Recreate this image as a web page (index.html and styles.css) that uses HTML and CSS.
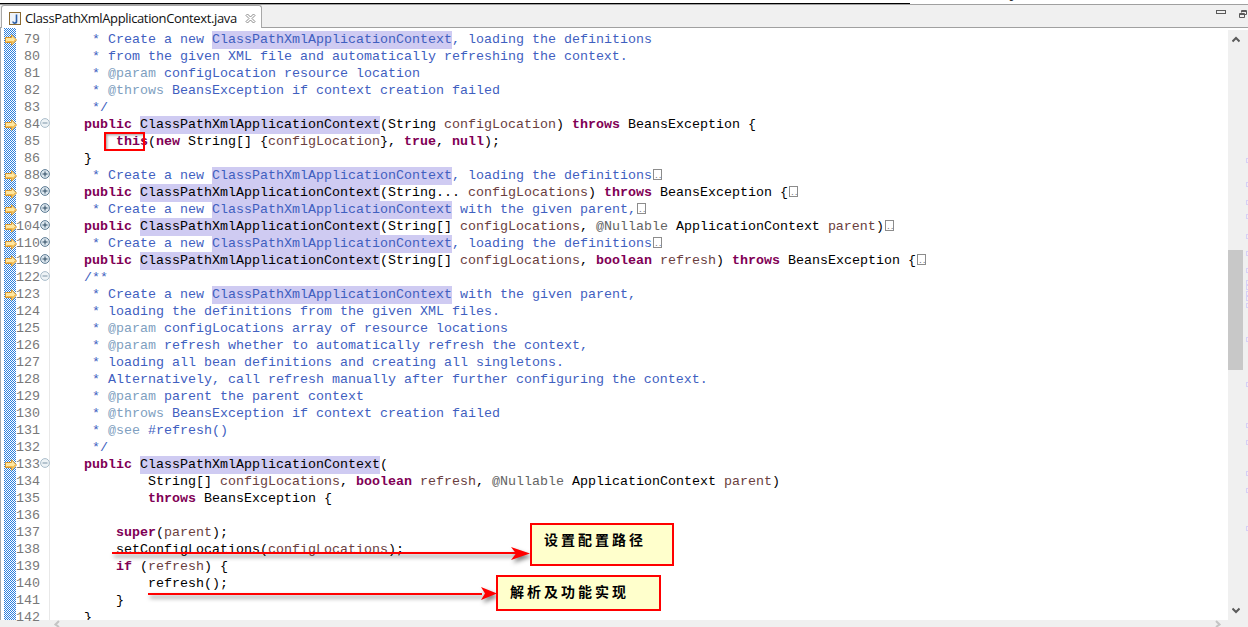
FILE: index.html
```html
<!DOCTYPE html>
<html lang="en">
<head>
<meta charset="utf-8">
<title>ClassPathXmlApplicationContext.java</title>
<link rel="stylesheet" href="styles.css">
</head>
<body>
<svg class="defs" width="0" height="0" aria-hidden="true">
  <symbol id="arrow" viewBox="0 0 12 12"><path d="M.5 3.500H6.500V.8L11.500 6 6.500 11.200V8.500H.5z" fill="#ffe7a0" stroke="#d8962a" stroke-width="1"/><path d="M1.500 7.500H7.500V9L10 6" fill="none" stroke="#f2b94a"/></symbol>
  <symbol id="plus" viewBox="0 0 10 10"><circle cx="5" cy="5" r="4.400" fill="#dbe6ee" stroke="#5f7d94"/><path d="M2.500 5h5M5 2.500v5" stroke="#2c4a62" stroke-width="1"/></symbol>
  <symbol id="minus" viewBox="0 0 10 10"><circle cx="5" cy="5" r="4.400" fill="#eef3f6" stroke="#a9bcc9"/><path d="M2.500 5h5" stroke="#7c95a7" stroke-width="1"/></symbol>
</svg>
<div class="window">
  <div class="topstrip"><span class="strip-black"></span><span class="strip-j">J</span></div>
  <div class="tabbar">
    <div class="tab">
      <svg class="file-icon" width="12" height="13" viewBox="0 0 12 13"><rect x=".5" y=".5" width="11" height="12" fill="#eef3fa" stroke="#8a6a32"/><path d="M7.500 2.500v6.500a1.800 1.800 0 0 1-3.600 .5" fill="none" stroke="#2a5ea8" stroke-width="1.600"/></svg>
      <span class="tab-title">ClassPathXmlApplicationContext.java</span>
      <svg class="close-icon" width="11" height="11" viewBox="0 0 11 11"><path d="M1 2.500 2.500 1 5.500 4 8.500 1 10 2.500 7 5.500 10 8.500 8.500 10 5.500 7 2.500 10 1 8.500 4 5.500z" fill="#fff" stroke="#8b8b8b"/></svg>
    </div>
    <div class="tab-tools">
      <span class="tool-min"></span>
      <svg class="tool-restore" width="8" height="8" viewBox="0 0 8 8"><path d="M2.500 2.500V.5h5v4H5.500M.5 3.500h5v4h-5zM.5 4.500h5M2.500 1.500h5" fill="#f0f0f0" stroke="#5a5a5a"/></svg>
    </div>
  </div>
  <div class="editor">
    <div class="annot">
      <i class="cell"><svg class="mk"><use href="#arrow"/></svg></i><i class="cell"></i><i class="cell"></i><i class="cell"></i><i class="cell"></i>
      <i class="cell"><svg class="mk"><use href="#arrow"/></svg></i><i class="cell"></i><i class="cell"></i>
      <i class="cell"><svg class="mk"><use href="#arrow"/></svg></i><i class="cell"><svg class="mk"><use href="#arrow"/></svg></i><i class="cell"><svg class="mk"><use href="#arrow"/></svg></i><i class="cell"><svg class="mk"><use href="#arrow"/></svg></i><i class="cell"><svg class="mk"><use href="#arrow"/></svg></i><i class="cell"><svg class="mk"><use href="#arrow"/></svg></i>
      <i class="cell"></i>
      <i class="cell"><svg class="mk"><use href="#arrow"/></svg></i>
      <i class="cell"></i><i class="cell"></i><i class="cell"></i><i class="cell"></i><i class="cell"></i><i class="cell"></i><i class="cell"></i><i class="cell"></i><i class="cell"></i>
      <i class="cell"><svg class="mk"><use href="#arrow"/></svg></i>
    </div>
    <div class="nums"><span>79</span><span>80</span><span>81</span><span>82</span><span>83</span><span>84</span><span>85</span><span>86</span><span>88</span><span>93</span><span>97</span><span>104</span><span>110</span><span>119</span><span>122</span><span>123</span><span>124</span><span>125</span><span>126</span><span>127</span><span>128</span><span>129</span><span>130</span><span>131</span><span>132</span><span>133</span><span>134</span><span>135</span><span>136</span><span>137</span><span>138</span><span>139</span><span>140</span><span>141</span><span>142</span></div>
    <div class="folds">
      <i class="cell"></i><i class="cell"></i><i class="cell"></i><i class="cell"></i><i class="cell"></i>
      <i class="cell"><svg class="fd"><use href="#minus"/></svg></i><i class="cell"></i><i class="cell"></i>
      <i class="cell"><svg class="fd"><use href="#plus"/></svg></i><i class="cell"><svg class="fd"><use href="#plus"/></svg></i><i class="cell"><svg class="fd"><use href="#plus"/></svg></i><i class="cell"><svg class="fd"><use href="#plus"/></svg></i><i class="cell"><svg class="fd"><use href="#plus"/></svg></i><i class="cell"><svg class="fd"><use href="#plus"/></svg></i>
      <i class="cell"><svg class="fd"><use href="#minus"/></svg></i>
      <i class="cell"></i><i class="cell"></i><i class="cell"></i><i class="cell"></i><i class="cell"></i><i class="cell"></i><i class="cell"></i><i class="cell"></i><i class="cell"></i><i class="cell"></i>
      <i class="cell"><svg class="fd"><use href="#minus"/></svg></i>
    </div>
<pre class="code"><span class="c">     * Create a new <mark>ClassPathXmlApplicationContext</mark>, loading the definitions</span>
<span class="c">     * from the given XML file and automatically refreshing the context.</span>
<span class="c">     * <span class="t">@param</span> configLocation resource location</span>
<span class="c">     * <span class="t">@throws</span> BeansException if context creation failed</span>
<span class="c">     */</span>
    <b>public</b> <mark>ClassPathXmlApplicationContext</mark>(String <span class="v">configLocation</span>) <b>throws</b> BeansException {
        <b>this</b>(<b>new</b> String[] {<span class="v">configLocation</span>}, <b>true</b>, <b>null</b>);
    }
<span class="c">     * Create a new <mark>ClassPathXmlApplicationContext</mark>, loading the definitions</span><span class="more">..</span>
    <b>public</b> <mark>ClassPathXmlApplicationContext</mark>(String... <span class="v">configLocations</span>) <b>throws</b> BeansException {<span class="more">..</span>
<span class="c">     * Create a new <mark>ClassPathXmlApplicationContext</mark> with the given parent,</span><span class="more">..</span>
    <b>public</b> <mark>ClassPathXmlApplicationContext</mark>(String[] <span class="v">configLocations</span>, <span class="a">@Nullable</span> ApplicationContext <span class="v">parent</span>)<span class="more">..</span>
<span class="c">     * Create a new <mark>ClassPathXmlApplicationContext</mark>, loading the definitions</span><span class="more">..</span>
    <b>public</b> <mark>ClassPathXmlApplicationContext</mark>(String[] <span class="v">configLocations</span>, <b>boolean</b> <span class="v">refresh</span>) <b>throws</b> BeansException {<span class="more">..</span>
<span class="c">    /**</span>
<span class="c">     * Create a new <mark>ClassPathXmlApplicationContext</mark> with the given parent,</span>
<span class="c">     * loading the definitions from the given XML files.</span>
<span class="c">     * <span class="t">@param</span> configLocations array of resource locations</span>
<span class="c">     * <span class="t">@param</span> refresh whether to automatically refresh the context,</span>
<span class="c">     * loading all bean definitions and creating all singletons.</span>
<span class="c">     * Alternatively, call refresh manually after further configuring the context.</span>
<span class="c">     * <span class="t">@param</span> parent the parent context</span>
<span class="c">     * <span class="t">@throws</span> BeansException if context creation failed</span>
<span class="c">     * <span class="t">@see</span> #refresh()</span>
<span class="c">     */</span>
    <b>public</b> <mark>ClassPathXmlApplicationContext</mark>(
            String[] <span class="v">configLocations</span>, <b>boolean</b> <span class="v">refresh</span>, <span class="a">@Nullable</span> ApplicationContext <span class="v">parent</span>)
            <b>throws</b> BeansException {

        <b>super</b>(<span class="v">parent</span>);
        setConfigLocations(<span class="v">configLocations</span>);
        <b>if</b> (<span class="v">refresh</span>) {
            refresh();
        }
    }</pre>
    <div class="vscroll">
      <svg class="chev" width="8" height="7" viewBox="0 0 8 7"><path d="M.5 5.500 4 2 7.500 5.500" fill="none" stroke="#5a5a5a" stroke-width="2"/></svg>
      <div class="thumb"></div>
      <svg class="chev" width="8" height="7" viewBox="0 0 8 7"><path d="M.5 1.500 4 5 7.500 1.500" fill="none" stroke="#5a5a5a" stroke-width="2"/></svg>
      <i class="ov ov1"></i><i class="ov ov2"></i><i class="ov ov3"></i><i class="ov ov4"></i><i class="ov ov5"></i><i class="ov ov6"></i><i class="ov ov7"></i><i class="ov ov8"></i><i class="ov ov9"></i><i class="ov ov10"></i><i class="ov ov11"></i><i class="ov ov12"></i><i class="ov ov13"></i><i class="ov ov14"></i><i class="ov ov15"></i><i class="ov ov16"></i><i class="ov ov17"></i><i class="ov ov18"></i><i class="ov ov19"></i>
    </div>
  </div>
  <div class="hscroll">
    <svg width="6" height="7" viewBox="0 0 6 7"><path d="M5 1 1.500 4.500 5 7" fill="none" stroke="#c4c4c4" stroke-width="2"/></svg>
    <svg width="6" height="7" viewBox="0 0 6 7"><path d="M1 1 4.500 4.500 1 7" fill="none" stroke="#c4c4c4" stroke-width="2"/></svg>
  </div>

  <div class="redbox"></div>
  <svg class="pointers" width="1248" height="627" viewBox="0 0 1248 627" aria-hidden="true">
    <path d="M112 553H516" stroke="#f00" stroke-width="2" fill="none"/>
    <path d="M511 547 530 553.500 511 560 516 553.500z" fill="#f00"/>
    <path d="M148 594H482" stroke="#f00" stroke-width="2" fill="none"/>
    <path d="M481 587 497 593.500 481 600 485 593.500z" fill="#f00"/>
  </svg>
  <div class="note note-one">设置配置路径</div>
  <div class="note note-two">解析及功能实现</div>
</div>
</body>
</html>
```

FILE: styles.css
```css
* { box-sizing: border-box; }
html, body { margin: 0; padding: 0; background: #fff; }
.defs { position: absolute; }
.window { position: relative; width: 1248px; height: 627px; overflow: hidden; background: #fff; display: flex; flex-direction: column; }

.topstrip { height: 5px; flex: none; border-bottom: 1px solid #a0a0a0; display: flex; align-items: flex-start; position: relative; background: #fff; }
.strip-black { display: block; width: 910px; height: 4px; border-bottom: 1px solid #000; }
.strip-j { position: absolute; left: 1009px; top: -9px; font: 11px "Liberation Sans", sans-serif; color: #222; }

.tabbar { height: 23px; flex: none; display: flex; justify-content: space-between; background: #f0f0f0; border-bottom: 1px solid #a0a0a0; }
.tab { width: 261px; height: 23px; margin-left: 1px; background: #fff; border: 1px solid #a8a8a8; border-bottom: 0; border-radius: 3px 3px 0 0; display: flex; align-items: center; padding: 2px 0 0 7px; }
.file-icon { flex: none; margin-right: 4px; }
.tab-title { font: 13px "Open Sans", sans-serif; color: #111; white-space: nowrap; width: 220px; letter-spacing: -.36px; }
.close-icon { flex: none; }
.tab-tools { display: flex; align-items: flex-start; padding: 5px 1px 0 0; }
.tool-min { display: block; width: 10px; height: 4px; border: 1px solid #5a5a5a; background: #f0f0f0; margin-right: 13px; }

.editor { flex: 1; min-height: 0; display: flex; align-items: stretch; background: #fff; position: relative; border-left: 1px solid #a8a8a8; }
.annot { flex: none; width: 12px; margin-left: 3px; padding-top: 3px; display: flex; flex-direction: column; background: url("data:image/svg+xml,%3Csvg xmlns='http://www.w3.org/2000/svg' width='2' height='2' shape-rendering='crispEdges'%3E%3Crect width='2' height='2' fill='%23fff'/%3E%3Crect width='1' height='1' fill='%232b7fde'/%3E%3Crect x='1' y='1' width='1' height='1' fill='%232b7fde'/%3E%3C/svg%3E") 0 0 / 2px 2px; }
.cell { display: block; height: 17px; flex: none; position: relative; }
.mk { display: block; width: 12px; height: 12px; margin: 3px 0 0 1px; overflow: visible; }
.nums { flex: none; width: 24px; padding-top: 3px; display: flex; flex-direction: column; font: 13.333px/17px "Liberation Mono", monospace; color: #787878; text-align: right; }
.nums span { display: block; height: 17px; }
.folds { flex: none; width: 10px; padding-top: 3px; display: flex; flex-direction: column; border-right: 1px solid #e8e8e8; }
.fd { display: block; width: 10px; height: 10px; margin-top: 2px; }

.code { flex: 1; min-width: 0; margin: 0; padding: 3px 0 0 2px; overflow: hidden; font: 13.333px/17px "Liberation Mono", monospace; color: #000; white-space: pre; }
.code b { color: #7f0055; font-weight: bold; }
.code .c { color: #3f5fbf; }
.code .t { color: #7f9fbf; }
.code .v { color: #6a3e3e; }
.code .a { color: #646464; }
.code mark { background: #cfcbf2; color: inherit; padding: 1px 0 2px; }
.more { display: inline-block; width: 9px; height: 11px; margin-left: 1px; border: 1px solid #8c8c8c; color: #777; font-size: 8px; line-height: 11px; vertical-align: -1px; overflow: hidden; letter-spacing: -1px; }

.vscroll { flex: none; width: 20px; margin-top: 2px; background: #f0f0f0; position: relative; display: flex; flex-direction: column; align-items: flex-start; }
.chev { position: absolute; left: 4px; }
.chev:first-child { top: 6px; }
.chev:nth-child(3) { bottom: 6px; }
.thumb { width: 15px; height: 120px; margin-top: 220px; background: #c8c8c8; }
.ov { position: absolute; left: 18px; width: 3px; height: 5px; border: 1px solid #d6d0f5; border-right: 0; }
.ov1 { top: 128px; } .ov2 { top: 152px; } .ov3 { top: 170px; } .ov4 { top: 184px; } .ov5 { top: 204px; }
.ov6 { top: 221px; } .ov7 { top: 238px; } .ov8 { top: 250px; } .ov9 { top: 255px; } .ov10 { top: 261px; }
.ov11 { top: 266px; } .ov12 { top: 273px; } .ov13 { top: 307px; } .ov14 { top: 352px; } .ov15 { top: 393px; }
.ov16 { top: 410px; } .ov17 { top: 441px; } .ov18 { top: 458px; } .ov19 { top: 496px; }

.hscroll { height: 7px; flex: none; background: #f0f0f0; display: flex; justify-content: space-between; padding: 0 27px 0 54px; overflow: hidden; }

.redbox { position: absolute; left: 104px; top: 132px; width: 41px; height: 19px; border: 2px solid #f00; box-shadow: inset 3px 3px 3px -2px rgba(0,0,0,.4); }
.pointers { position: absolute; left: 0; top: 0; filter: drop-shadow(2px 3px 2px rgba(0,0,0,.5)); }
.note { position: absolute; border: 2px solid #f00; background: #ffffcc; font: bold 14px "Noto Sans CJK SC", sans-serif; color: #000; letter-spacing: 3px; display: flex; align-items: center; padding: 0 0 4px 12px; }
.note-one { left: 530px; top: 523px; width: 144px; height: 43px; padding-bottom: 12px; }
.note-two { left: 496px; top: 575px; width: 165px; height: 36px; }
```
